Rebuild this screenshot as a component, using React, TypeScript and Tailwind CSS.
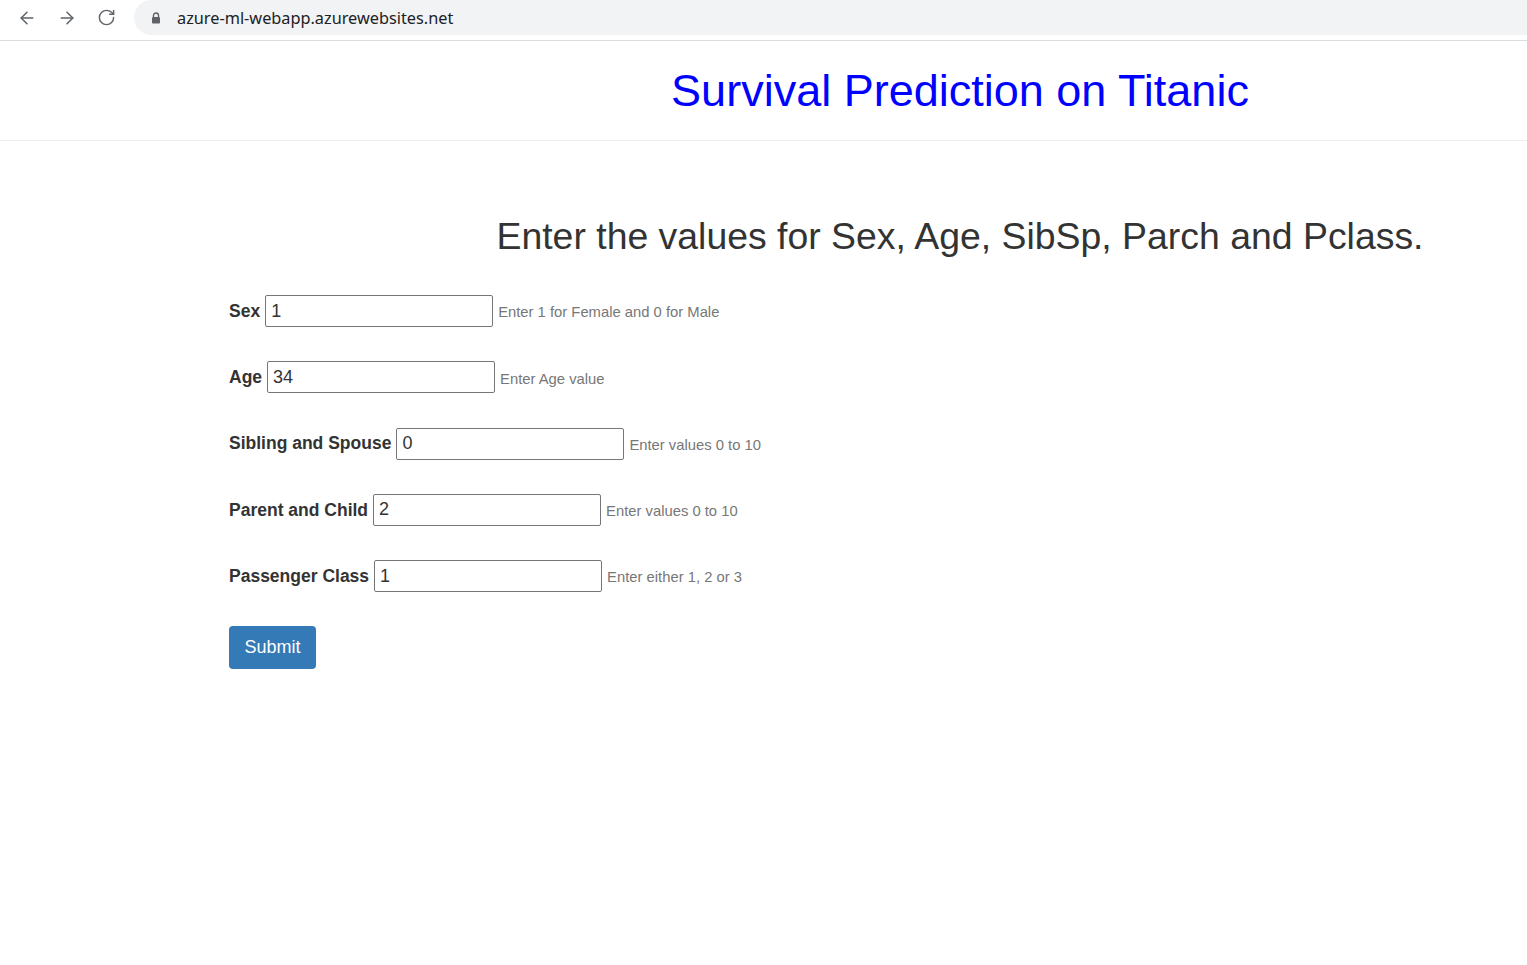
import { ArrowLeft, ArrowRight, RotateCw } from "lucide-react";

const campos = [
  { label: "Sex", value: "1", ayuda: "Enter 1 for Female and 0 for Male" },
  { label: "Age", value: "34", ayuda: "Enter Age value" },
  { label: "Sibling and Spouse", value: "0", ayuda: "Enter values 0 to 10" },
  { label: "Parent and Child", value: "2", ayuda: "Enter values 0 to 10" },
  { label: "Passenger Class", value: "1", ayuda: "Enter either 1, 2 or 3" },
];

function BarraNavegador() {
  return (
    <div className="flex h-[41px] items-start border-b border-[#dadce0] bg-white">
      <div className="flex h-[35px] items-center gap-[20px] pl-[17px] pr-[18px] text-[#5f6368]">
        <ArrowLeft size={20} strokeWidth={1.8} />
        <ArrowRight size={20} strokeWidth={1.8} />
        <RotateCw size={19} strokeWidth={1.8} />
      </div>
      <div className="flex h-[35px] flex-1 items-center rounded-l-full bg-[#f1f3f4] pl-[17px]">
        <svg width="10" height="12" viewBox="0 0 10 12" className="text-[#5f6368]">
          <path d="M2.5 5V3.5a2.5 2.5 0 0 1 5 0V5" fill="none" stroke="currentColor" strokeWidth="1.4" />
          <rect x="1" y="5" width="8" height="6.5" rx="1" fill="currentColor" />
        </svg>
        <span className="ml-[16px] pt-[1px] font-['Noto_Sans',sans-serif] text-[16.3px] text-[#202124]">
          azure-ml-webapp.azurewebsites.net
        </span>
      </div>
    </div>
  );
}

export default function App() {
  return (
    <div className="min-h-screen bg-white font-['Liberation_Sans',Arial,sans-serif] text-[#333]">
      <BarraNavegador />

      {/* Encabezado */}
      <header className="border-b border-[#eee] pt-[24px] pb-[23px] pl-[393px]">
        <h1 className="text-center text-[45px] leading-[52px] text-[#0000ff]">
          Survival Prediction on Titanic
        </h1>
      </header>

      <main className="pt-[75px]">
        <h2 className="pl-[393px] text-center text-[37.4px] leading-[40px] text-[#333]">
          Enter the values for Sex, Age, SibSp, Parch and Pclass.
        </h2>

        <form className="mt-[39px] pl-[229px]">
          {campos.map((c) => (
            <div key={c.label} className="mb-[34.25px] flex h-[32px] items-center">
              <label className="text-[17.5px] font-bold text-[#333]">{c.label}</label>
              <input
                type="text"
                defaultValue={c.value}
                className="ml-[5px] h-[32px] w-[228px] rounded-[2px] border border-[#767676] px-[5px] text-[18px] text-[#333] outline-none"
              />
              <span className="ml-[5px] pt-[3px] text-[14.8px] text-[#777]">{c.ayuda}</span>
            </div>
          ))}
          <button
            type="button"
            className="h-[43px] w-[87px] rounded-[4px] bg-[#337ab7] text-[18px] text-white"
          >
            Submit
          </button>
        </form>
      </main>
    </div>
  );
}
